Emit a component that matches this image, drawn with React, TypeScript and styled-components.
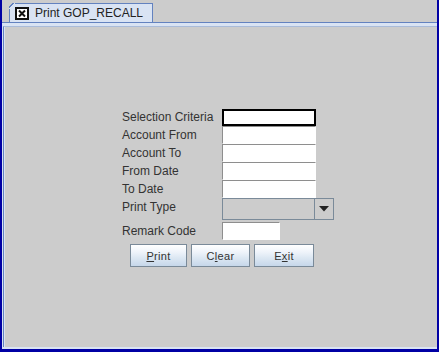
import React from "react";
import styled, { createGlobalStyle } from "styled-components";

const Global = createGlobalStyle`
  html, body { margin: 0; padding: 0; background: #cccccc; }
  body { font-family: "Liberation Sans", Arial, sans-serif; }
  * { box-sizing: border-box; }
`;

const Frame = styled.div`
  width: 439px;
  height: 352px;
  border-left: 2px solid #0000a4;
  border-right: 2px solid #0000a4;
  border-bottom: 3px solid #0000a4;
  background: #cccccc;
  display: flex;
  flex-direction: column;
`;

const TabStrip = styled.div`
  height: 22px;
  display: flex;
  align-items: flex-end;
  padding-left: 7px;
  flex-shrink: 0;
`;

const Tab = styled.div`
  position: relative;
  width: 144px;
  height: 19px;
  border: 1px solid #6382bf;
  border-bottom: none;
  background: #d9e3f3;
  display: flex;
  align-items: center;
  padding-left: 5px;
  gap: 6px;
  &::before {
    content: "";
    position: absolute;
    left: -1px;
    top: -1px;
    width: 6px;
    height: 6px;
    background: linear-gradient(
      135deg,
      #cccccc 0,
      #cccccc 2.6px,
      #6382bf 2.6px,
      #6382bf 4px,
      #d9e3f3 4px
    );
  }
`;

const TabIcon = styled.svg`
  width: 14px;
  height: 13px;
  flex-shrink: 0;
`;

const TabTitle = styled.span`
  font-size: 12px;
  color: #222222;
  white-space: nowrap;
`;

const Pane = styled.div`
  flex: 1;
  display: flex;
  flex-direction: column;
  border-top: 1px solid #6382bf;
  background: #d9e3f3;
  padding: 3px 0 2px 1px;
`;

const Content = styled.div`
  flex: 1;
  border-left: 1px solid #6382bf;
  border-top: 1px solid #a9bbd9;
  background: #cccccc;
  box-shadow: inset 1px 0 0 #d9e3f3;
  padding: 81px 0 0 118px;
`;

const Form = styled.div`
  display: grid;
  grid-template-columns: 100px auto;
  grid-template-rows: repeat(5, 18px) 22px 20px 27px;
  align-items: center;
  justify-items: start;
`;

const Label = styled.label<{ $align?: string }>`
  font-size: 12px;
  color: #333333;
  white-space: nowrap;
  height: 18px;
  display: flex;
  align-items: center;
  align-self: ${(p) => p.$align ?? "center"};
`;

const Field = styled.div<{ $w?: number; $focus?: boolean; $end?: boolean }>`
  width: ${(p) => p.$w ?? 94}px;
  height: ${(p) => (p.$focus ? 17 : 18)}px;
  background: #ffffff;
  border: ${(p) => (p.$focus ? "2px solid #000000" : "1px solid")};
  border-color: ${(p) => (p.$focus ? "#000000" : "#8e8e8e #ffffff #ffffff #8e8e8e")};
  align-self: ${(p) => (p.$focus || p.$end ? "end" : "center")};
`;

const Combo = styled.div`
  width: 112px;
  height: 22px;
  border: 1px solid #7a8a99;
  background: #cccccc;
  display: flex;
  justify-content: flex-end;
`;

const ComboButton = styled.div`
  width: 19px;
  height: 100%;
  border-left: 1px solid #7a8a99;
  display: flex;
  align-items: center;
  justify-content: center;
`;

const Buttons = styled.div`
  grid-column: 1 / span 2;
  display: flex;
  gap: 4px;
  margin-left: 8px;
  align-self: end;
`;

const Button = styled.button<{ $w: number }>`
  width: ${(p) => p.$w}px;
  height: 23px;
  border: 1px solid #7a8a99;
  border-radius: 0;
  background: linear-gradient(#ffffff 0%, #eef3fa 35%, #dde8f3 60%, #c6d7ea 100%);
  font-family: "Liberation Sans", Arial, sans-serif;
  font-size: 11px;
  color: #333333;
  padding: 0;
  letter-spacing: 0.3px;
  u { text-decoration: underline; }
`;

export default function App() {
  return (
    <>
      <Global />
      <Frame>
        <TabStrip>
          <Tab>
            <TabIcon viewBox="0 0 14 13">
              <rect x="1" y="1" width="12" height="11" fill="#ffffff" stroke="#111" strokeWidth="2" />
              <path d="M4 3.5 L10 9.5 M10 3.5 L4 9.5" stroke="#111" strokeWidth="2" />
            </TabIcon>
            <TabTitle>Print GOP_RECALL</TabTitle>
          </Tab>
        </TabStrip>
        <Pane>
          <Content>
            <Form>
              <Label>Selection Criteria</Label>
              <Field $focus />
              <Label>Account From</Label>
              <Field />
              <Label>Account To</Label>
              <Field />
              <Label>From Date</Label>
              <Field />
              <Label>To Date</Label>
              <Field />
              <Label $align="start">Print Type</Label>
              <Combo>
                <ComboButton>
                  <svg width="10" height="6" viewBox="0 0 10 6">
                    <path d="M0 0 H10 L5 5.5 Z" fill="#222" />
                  </svg>
                </ComboButton>
              </Combo>
              <Label $align="end">Remark Code</Label>
              <Field $w={58} $end />
              <Buttons>
                <Button $w={57}><u>P</u>rint</Button>
                <Button $w={59}>C<u>l</u>ear</Button>
                <Button $w={60}>E<u>x</u>it</Button>
              </Buttons>
            </Form>
          </Content>
        </Pane>
      </Frame>
    </>
  );
}
